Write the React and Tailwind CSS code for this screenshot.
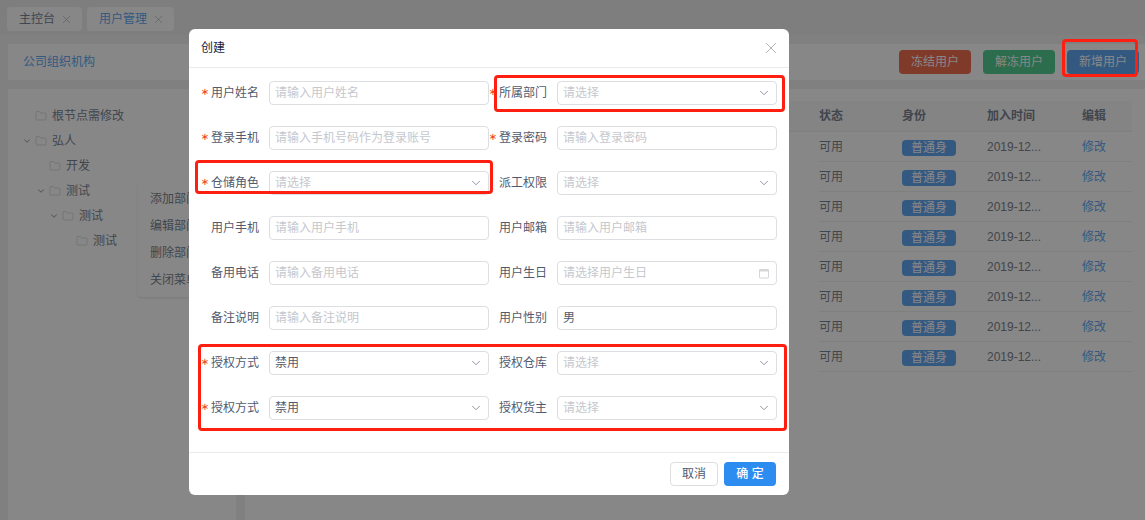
import { ChevronDown, Folder, X } from "lucide-react";

const font = { fontFamily: '"Liberation Sans", "Noto Sans CJK SC", sans-serif' };

const fields = [
  { label: "用户姓名", required: true, placeholder: "请输入用户姓名" },
  { label: "所属部门", required: true, placeholder: "请选择", select: true },
  { label: "登录手机", required: true, placeholder: "请输入手机号码作为登录账号" },
  { label: "登录密码", required: true, placeholder: "请输入登录密码" },
  { label: "仓储角色", required: true, placeholder: "请选择", select: true },
  { label: "派工权限", placeholder: "请选择", select: true },
  { label: "用户手机", placeholder: "请输入用户手机" },
  { label: "用户邮箱", placeholder: "请输入用户邮箱" },
  { label: "备用电话", placeholder: "请输入备用电话" },
  { label: "用户生日", placeholder: "请选择用户生日", date: true },
  { label: "备注说明", placeholder: "请输入备注说明" },
  { label: "用户性别", value: "男" },
  { label: "授权方式", required: true, value: "禁用", select: true },
  { label: "授权仓库", placeholder: "请选择", select: true },
  { label: "授权方式", required: true, value: "禁用", select: true },
  { label: "授权货主", placeholder: "请选择", select: true },
];

const tree = [
  { name: "根节点需修改", indent: 0 },
  { name: "弘人", indent: 0, open: true },
  { name: "开发", indent: 14 },
  { name: "测试", indent: 14, open: true },
  { name: "测试", indent: 27, open: true },
  { name: "测试", indent: 41 },
];

function DateIcon() {
  return (
    <svg width="12" height="11" viewBox="0 0 12 11" fill="none" className="mr-[1px] text-[#d4d6da]">
      <rect x="1.5" y="1.5" width="9" height="8.5" rx="0.5" stroke="currentColor" />
      <rect x="1.5" y="1.5" width="9" height="2" fill="currentColor" />
    </svg>
  );
}

function Field({ field }) {
  return (
    <div className="flex h-[45px] items-start">
      <div className="flex h-6 w-[58px] shrink-0 items-center justify-end whitespace-nowrap text-xs text-[#515a6e]">
        {field.required && (
          <span className="mr-[2px] pb-[2px] font-['DejaVu_Sans'] text-[10px] text-[#ed4014]">∗</span>
        )}
        {field.label}
      </div>
      <div className="ml-2.5 flex h-6 w-[220px] items-center justify-between rounded border border-[#dcdee2] bg-white pl-[5px] pr-[5px] text-xs">
        <span className={field.value ? "text-[#515a6e]" : "text-[#c5c8ce]"}>
          {field.value || field.placeholder}
        </span>
        {field.select && <ChevronDown size={14} strokeWidth={1.5} className="text-[#808695]" />}
        {field.date && <DateIcon />}
      </div>
    </div>
  );
}

function Tab({ label, active }) {
  return (
    <div className="flex h-6 items-center gap-[5px] rounded-sm bg-white pl-3 pr-[9px] text-xs">
      <span className={active ? "text-[#2d8cf0]" : "text-[#515a6e]"}>{label}</span>
      <X size={13} strokeWidth={1.25} className="text-[#999999]" />
    </div>
  );
}

function Row() {
  return (
    <div className="flex h-[30px] items-center border-b border-[#e8eaec] text-xs text-[#515a6e]">
      <span className="w-[83px]">可用</span>
      <span className="w-[85px] pt-[2px]">
        <span className="flex h-4 w-[54px] items-center justify-center rounded-sm bg-[#2d8cf0] text-white">普通身</span>
      </span>
      <span className="w-[95px]">2019-12...</span>
      <span className="text-[#2d8cf0]">修改</span>
    </div>
  );
}

export default function App() {
  return (
    <div style={font} className="relative h-[520px] w-[1145px] overflow-hidden bg-[#eeeeee]">
      <div className="flex h-[35px] gap-[5px] bg-[#e8e8e8] pl-[7px] pt-[7px]">
        <Tab label="主控台" />
        <Tab label="用户管理" active />
      </div>

      <div className="ml-2 mt-[9px] flex h-9 items-center justify-between bg-white pl-[15px] pr-1.5">
        <span className="text-xs text-[#2d8cf0]">公司组织机构</span>
        <div className="flex gap-3">
          <button className="h-6 w-[72px] rounded-sm bg-[#ed4014] text-xs text-white">冻结用户</button>
          <button className="h-6 w-[72px] rounded-sm bg-[#19be6b] text-xs text-white">解冻用户</button>
          <button className="h-6 w-[72px] rounded-sm bg-[#2d8cf0] text-xs text-white">新增用户</button>
        </div>
      </div>

      <div className="mt-[9px] flex gap-[9px] pl-2">
        <div className="relative h-[431px] w-[228px] bg-white pl-3.5 pt-[14px]">
          {tree.map((node, i) => (
            <div key={i} style={{ marginLeft: node.indent }} className="flex h-[25px] items-center text-xs text-[#515a6e]">
              <span className="flex w-[13px] justify-start">
                {node.open && <ChevronDown size={10} />}
              </span>
              <Folder size={12} strokeWidth={1} className="text-[#9ea1a8]" />
              <span className="ml-[5px]">{node.name}</span>
            </div>
          ))}
          <div className="absolute left-[130px] top-[92px] w-[100px] rounded bg-white py-[4px] pl-3 text-xs text-[#515a6e] shadow">
            <div className="flex h-[27px] items-center">添加部门</div>
            <div className="flex h-[27px] items-center">编辑部门</div>
            <div className="flex h-[27px] items-center">删除部门</div>
            <div className="flex h-[27px] items-center">关闭菜单</div>
          </div>
        </div>

        <div className="h-[431px] flex-1 bg-white pl-2.5 pr-[13px] pt-3">
          <div className="flex h-[31px] items-center border-b border-[#e8eaec] bg-[#f8f8f9] pl-[564px] text-xs font-bold text-[#515a6e]">
            <span className="w-[83px]">状态</span>
            <span className="w-[85px]">身份</span>
            <span className="w-[95px]">加入时间</span>
            <span>编辑</span>
          </div>
          <div className="pl-[564px]">
            {Array.from({ length: 8 }).map((_, i) => (
              <Row key={i} />
            ))}
          </div>
        </div>
      </div>

      {/* dimmed layer and dialog */}
      <div className="absolute inset-0 bg-[#373737]/60" />

      <div className="absolute left-[189px] top-[29px] h-[466px] w-[600px] rounded-md bg-white">
        <div className="flex h-[39px] items-center justify-between border-b border-[#e8eaec] pl-3 pr-[9px]">
          <span className="text-xs text-[#17233d]">创建</span>
          <X size={18} strokeWidth={1} className="text-[#999999]" />
        </div>
        <div className="grid h-[384px] w-[600px] grid-cols-[288px_288px] content-start pl-3 pt-[13px]">
          {fields.map((field, i) => (
            <Field key={i} field={field} />
          ))}
        </div>
        <div className="flex h-[43px] justify-end gap-1.5 border-t border-[#e8eaec] pr-[13px] pt-[9px]">
          <button className="h-6 w-12 rounded border border-[#dcdee2] text-xs text-[#515a6e]">取消</button>
          <button className="h-6 w-[52px] rounded bg-[#2d8cf0] text-xs font-medium text-white">确 定</button>
        </div>
      </div>

      {/* red annotations */}
      <div className="absolute left-[494px] top-[75px] h-[37px] w-[291px] rounded-sm border-[3px] border-[#ff1f10]" />
      <div className="absolute left-[195px] top-[160px] h-[34px] w-[298px] rounded-sm border-[3px] border-[#ff1f10]" />
      <div className="absolute left-[198px] top-[344px] h-[87px] w-[589px] rounded-sm border-[3px] border-[#ff1f10]" />
      <div className="absolute left-[1062px] top-[39px] h-[38px] w-[76px] rounded-sm border-[3px] border-[#ff1f10]" />
    </div>
  );
}
